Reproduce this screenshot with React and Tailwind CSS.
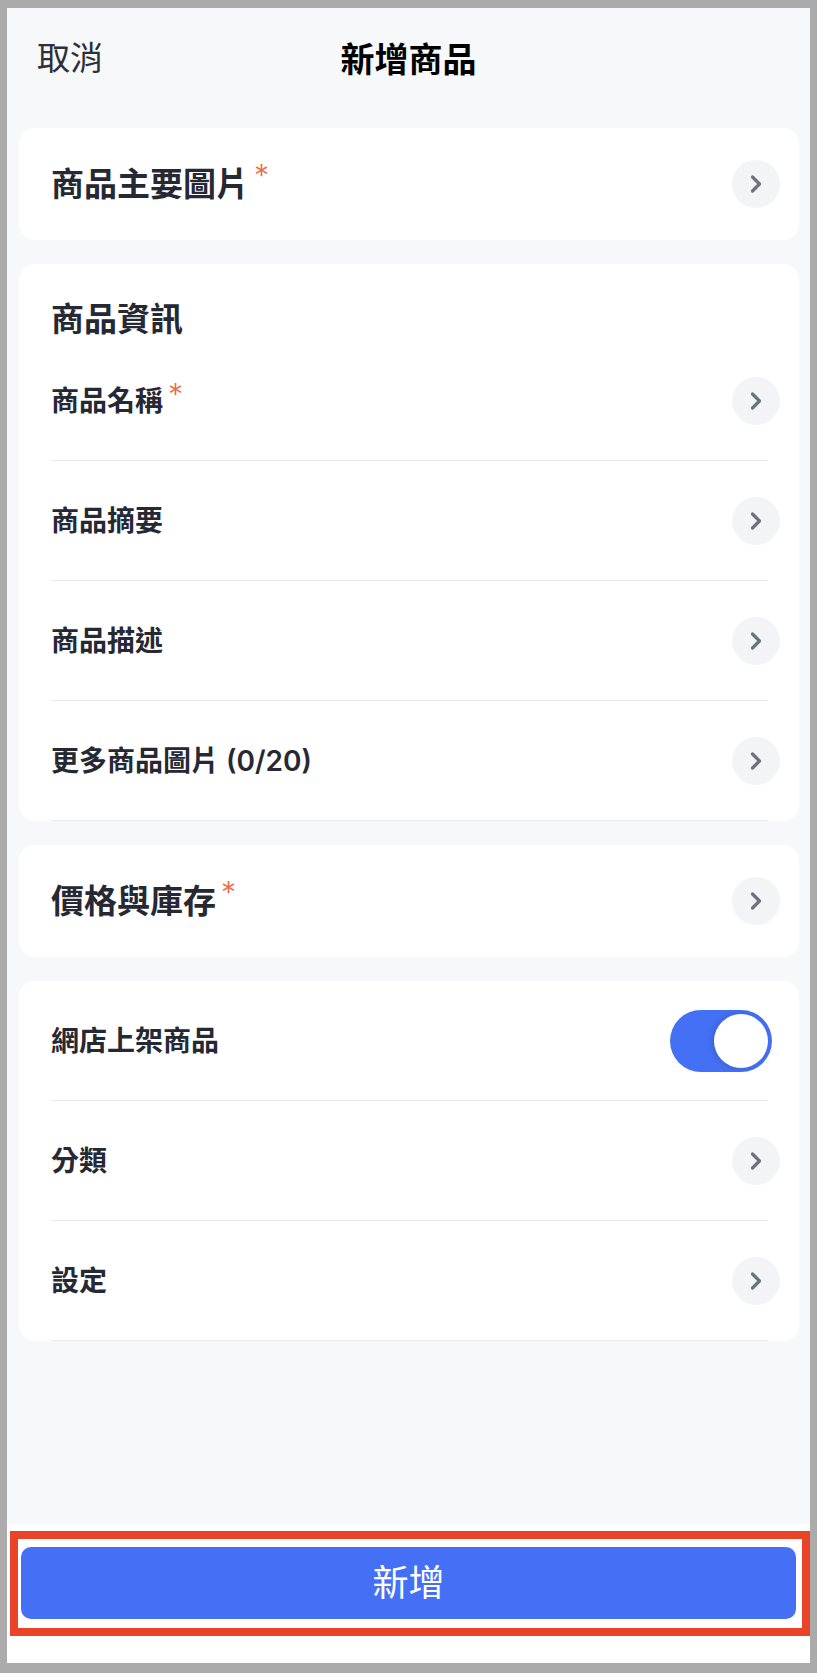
import { ChevronRight } from 'lucide-react';

const font = { fontFamily: 'Inter, "Noto Sans CJK TC", "Noto Sans", sans-serif' };

const Arrow = () => (
  <div className="-mr-3 flex h-12 w-12 shrink-0 items-center justify-center rounded-full bg-[#f3f4f6]">
    <ChevronRight size={28} strokeWidth={2.8} className="text-[#6b7280]" />
  </div>
);

const Star = () => (
  <span className="ml-[5px] -mt-[8px] self-start text-[30px] font-light leading-none text-[#ee6a43]">*</span>
);

const SectionCard = ({ label }) => (
  <div className="flex h-[112px] items-center rounded-2xl bg-white pl-8 pr-[31px]">
    <div className="flex flex-1 items-center">
      <span className="text-[33px] font-bold leading-none text-[#262833]">{label}</span>
      <Star />
    </div>
    <Arrow />
  </div>
);

const Row = ({ label, required, children }) => (
  <div className="flex h-[120px] items-center border-b border-[#e9eaee]">
    <div className="flex flex-1 items-center">
      <span className="text-[28px] font-semibold leading-none text-[#262833]">{label}</span>
      {required && <Star />}
    </div>
    {children || <Arrow />}
  </div>
);

const Toggle = () => (
  <div className="-mr-1 flex h-[62px] w-[102px] items-center justify-end rounded-full bg-[#4470f5] pr-1">
    <div className="h-[54px] w-[54px] rounded-full bg-white shadow-[-2px_0_6px_rgba(0,0,0,0.15)]" />
  </div>
);

export default function App() {
  return (
    <div className="h-[1673px] bg-[#ababab] pt-2 pr-[7px] pb-[10px] pl-[7px]" style={font}>
      <div className="flex h-full flex-col bg-[#f7f8fa]">
        <div className="relative flex h-[102px] items-center justify-center">
          <span className="absolute left-[30px] text-[33px] text-[#2d2f3a]">取消</span>
          <span className="text-[34px] font-bold text-black">新增商品</span>
        </div>

        <div className="mt-[18px] ml-3 mr-[11px] flex flex-1 flex-col gap-6">
          <SectionCard label="商品主要圖片" />

          <div className="rounded-2xl bg-white pt-[34px]">
            <div className="px-8">
              <div className="flex h-[44px] items-center text-[33px] font-bold text-[#262833]">商品資訊</div>
            </div>
            <div className="ml-8 mr-[31px] -mt-[1px]">
              <Row label="商品名稱" required />
              <Row label="商品摘要" />
              <Row label="商品描述" />
              <Row label="更多商品圖片 (0/20)" />
            </div>
          </div>

          <SectionCard label="價格與庫存" />

          <div className="rounded-2xl bg-white">
            <div className="ml-8 mr-[31px]">
              <Row label="網店上架商品">
                <Toggle />
              </Row>
              <Row label="分類" />
              <Row label="設定" />
            </div>
          </div>
        </div>

        <div className="relative h-[139px] bg-white px-[14px] pt-[23px]">
          <button className="flex h-[72px] w-full items-center justify-center rounded-[10px] bg-[#4570f6] text-[36px] text-white">
            新增
          </button>
          <div className="pointer-events-none absolute top-[7px] right-0 bottom-[27px] left-[3px] border-8 border-[#e94428]" />
        </div>
      </div>
    </div>
  );
}
